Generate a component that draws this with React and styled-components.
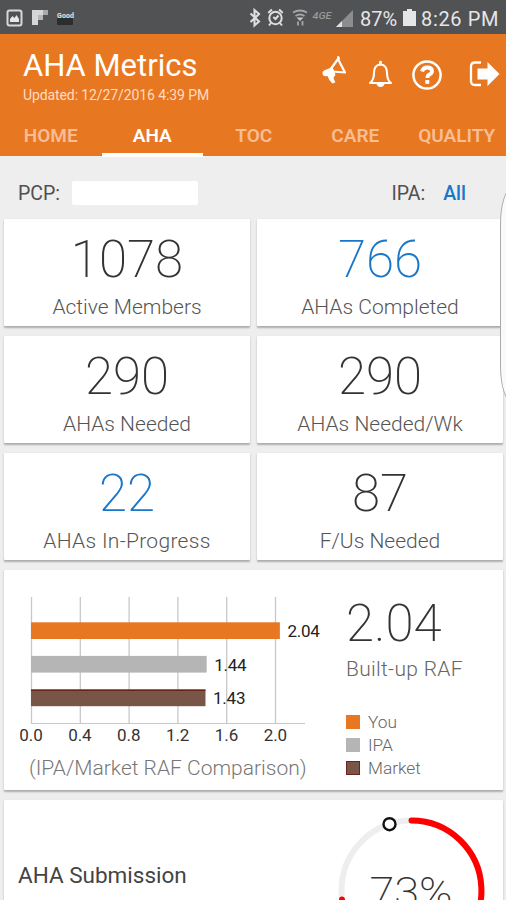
import React from 'react';
import styled, { createGlobalStyle } from 'styled-components';

const tabs = ['HOME', 'AHA', 'TOC', 'CARE', 'QUALITY'];

const metrics = [
  { value: '1078', label: 'Active Members' },
  { value: '766', label: 'AHAs Completed', link: true },
  { value: '290', label: 'AHAs Needed' },
  { value: '290', label: 'AHAs Needed/Wk' },
  { value: '22', label: 'AHAs In-Progress', link: true, wide: true },
  { value: '87', label: 'F/Us Needed' },
];

const bars = [
  { name: 'You', value: 2.04, color: '#e87722' },
  { name: 'IPA', value: 1.44, color: '#b5b5b5' },
  { name: 'Market', value: 1.43, color: '#795548', edge: '#6b2418' },
];

const ticks = [0, 0.4, 0.8, 1.2, 1.6, 2];

const NotificationIcons = () => (
  <svg width="76" height="34" viewBox="0 0 76 34">
    <rect x="7.5" y="10.5" width="14" height="15" rx="2" fill="none" stroke="#d8d8d8" strokeWidth="2" />
    <path d="M10 22v-3l2.5-3 2 2 2-3 2.5 4v3z" fill="#e8e8e8" />
    <path d="M32 10h16v5h-5v5h-5v5h-6z" fill="#d6d6d6" />
    <path d="M43 10h5v5h-5z" fill="#a9a9a9" />
    <path d="M38 15h5v5h-5z" fill="#b5b5b5" />
    <rect x="57" y="18" width="16" height="7" rx="1" fill="#2c2d2e" />
    <text x="57" y="18" fontSize="7" fontWeight="700" fill="#e2e2e2" textLength="17">Good</text>
  </svg>
);

const SignalIcons = () => (
  <svg width="108" height="34" viewBox="248 0 108 34">
    <path d="M250.5 13.5l8.5 8-4.5 4V10l4.5 4-8.5 8" fill="none" stroke="#dedede" strokeWidth="2.1" />
    <g fill="none" stroke="#dedede" strokeWidth="2">
      <circle cx="275.5" cy="18" r="6.2" />
      <path d="M278.5 15.500l-3 3.500-2.200-2M268.3 13l3.6-3.4M282.7 13l-3.6-3.4M271 23l-2 2.5M280 23l2 2.5" />
    </g>
    <g fill="none" stroke="#a5a6a6" strokeWidth="1.8">
      <path d="M293 12.500q7-4 14 0M295.500 16q4.500-3 9 0" />
      <path d="M296.500 17.500h7l-3.500 3.500z" fill="#c5c6c6" stroke="none" />
      <path d="M298 25.500v-4M302.500 21v4.500" />
    </g>
    <text x="312.5" y="18.500" fontSize="9" fontStyle="italic" fontWeight="500" fill="#97999a" textLength="19" lengthAdjust="spacingAndGlyphs">4GE</text>
    <path d="M336 27l17-17v17z" fill="#8b8d8e" />
    <path d="M336 27l6-6v6z" fill="#e2e2e2" />
  </svg>
);

const MegaphoneIcon = () => (
  <svg width="26" height="30" viewBox="321 56 26 30">
    <path d="M338 59l7 13.500-12.500-1-1-3.500z" fill="none" stroke="#fff" strokeWidth="2.2" strokeLinejoin="round" />
    <path d="M337 56.500l2-.5 1.200 3-3 .8z" fill="#fff" />
    <path d="M332.500 67l-8.500 3.500q-2 1-1.500 3.500t3.500 2.300l1.500-.3q1.500 5 5 7.500l3-1.200q-1.800-2.500-2-4.500l2-3z" fill="#fff" />
  </svg>
);

const BellIcon = () => (
  <svg width="26" height="30" viewBox="368 59 26 30">
    <path d="M370 83q4-3 4-10 0-8 6.500-8.500 6.500.5 6.500 8.500 0 7 4 10z" fill="none" stroke="#fff" strokeWidth="2.100" strokeLinejoin="round" />
    <path d="M379 65v-3.5q1.500-1.500 3 0V65zM376.5 84h8q-1 3-4 3t-4-3z" fill="#fff" />
  </svg>
);

const HelpIcon = () => (
  <svg width="32" height="32" viewBox="411 59 32 32">
    <circle cx="427" cy="75" r="13.6" fill="none" stroke="#fff" strokeWidth="2.5" />
    <path d="M422 71.5q1.200-4 5.300-4 4.700 0 4.700 3.700 0 2-2.500 3.300-2 1-2 3v.5" fill="none" stroke="#fff" strokeWidth="3.8" />
    <rect x="425.3" y="80" width="4" height="3.8" fill="#fff" />
  </svg>
);

const LogoutIcon = () => (
  <svg width="34" height="30" viewBox="467 60 34 30">
    <path d="M481 63.500h-6q-4 0-4 4v14.500q0 4 4 4h6" fill="none" stroke="#fff" strokeWidth="2.3" />
    <path d="M477.5 69.500h10v-6.500l12 12-12 12V80.500h-10z" fill="#fff" />
  </svg>
);

const RafChart = () => (
  <svg width="324" height="160" viewBox="4 590 324 160">
    {ticks.map((tick) => (
      <g key={tick}>
        <line x1={31.5 + tick * 122} x2={31.5 + tick * 122} y1="597" y2="723.5" stroke="#c8c8c8" strokeWidth="1.3" />
        <text x={31 + tick * 122.2} y="741" textAnchor="middle" fontSize="17" fill="#333" textLength="23.5">
          {tick.toFixed(1)}
        </text>
      </g>
    ))}
    <line x1="31" x2="305" y1="723.5" y2="723.5" stroke="#c8c8c8" />
    {bars.map((bar, i) => (
      <g key={bar.name}>
        <rect x="31" y={622.3 + i * 33.6} width={bar.value * 122} height="16.7" fill={bar.color} />
        {bar.edge && <rect x="31" y={622.3 + i * 33.6} width={bar.value * 122} height="1.5" fill={bar.edge} />}
        <text x={38.500 + bar.value * 122} y={637 + i * 33.6} fontSize="17" fill="#222" textLength="32.500">
          {bar.value}
        </text>
      </g>
    ))}
  </svg>
);

const SubmissionGauge = () => (
  <Gauge viewBox="330 800 164 100">
    <circle cx="411.5" cy="890.5" r="70" fill="none" stroke="#eee" strokeWidth="6" />
    <path d="M411.5 820.5A70 70 0 1 1 342 899.5" fill="none" stroke="#f00" strokeWidth="6" strokeLinecap="round" />
    <circle cx="389.5" cy="824.2" r="6" fill="#fff" stroke="#111" strokeWidth="2.4" />
    <text x="411" y="907" textAnchor="middle" fontSize="43" fontWeight="200" fill="#333" textLength="83" lengthAdjust="spacingAndGlyphs">73%</text>
  </Gauge>
);

const App = () => {
  return (
    <Screen>
      <GlobalStyle />
      <StatusBar>
        <NotificationIcons />
        <StatusInfo>
          <SignalIcons />
          <Battery>87%</Battery>
          <svg width="13" height="17" viewBox="0 0 13 17">
            <path d="M0 2h4V0h5v2h4v15H0z" fill="#e6e6e6" />
          </svg>
          <Clock>8:26 PM</Clock>
        </StatusInfo>
      </StatusBar>
      <Header>
        <HeaderTop>
          <div>
            <Title>AHA Metrics</Title>
            <Updated>Updated: 12/27/2016 4:39 PM</Updated>
          </div>
          <Actions>
            <MegaphoneIcon />
            <BellIcon />
            <HelpIcon />
            <LogoutIcon />
          </Actions>
        </HeaderTop>
        <TabBar>
          {tabs.map((tab) => (
            <Tab key={tab} $active={tab === 'AHA'}>{tab}</Tab>
          ))}
        </TabBar>
      </Header>
      <FilterRow>
        <FilterLabel>PCP:</FilterLabel>
        <NameField />
        <FilterLabel>IPA:</FilterLabel>
        <FilterLink>All</FilterLink>
      </FilterRow>
      <MetricGrid>
        {metrics.map((metric) => (
          <MetricCard key={metric.label}>
            <BigNumber $link={metric.link}>{metric.value}</BigNumber>
            <Label $wide={metric.wide}>{metric.label}</Label>
          </MetricCard>
        ))}
      </MetricGrid>
      <ChartCard>
        <ChartColumn>
          <RafChart />
          <Caption>(IPA/Market RAF Comparison)</Caption>
        </ChartColumn>
        <Summary>
          <BigNumber>2.04</BigNumber>
          <Label $wide>Built-up RAF</Label>
          <Legend>
            {bars.map((bar) => (
              <LegendItem key={bar.name}>
                <Swatch $color={bar.color} $edge={bar.edge} />
                {bar.name}
              </LegendItem>
            ))}
          </Legend>
        </Summary>
      </ChartCard>
      <SubmissionCard>
        <SubmissionTitle>AHA Submission</SubmissionTitle>
        <SubmissionGauge />
      </SubmissionCard>
      <EdgeHandle />
    </Screen>
  );
};

const GlobalStyle = createGlobalStyle`
  * {
    box-sizing: border-box;
  }

  body {
    margin: 0;
    overflow: hidden;
    font-family: Roboto, "Liberation Sans", sans-serif;
  }

  svg {
    display: block;
    flex-shrink: 0;
  }
`;

const Screen = styled.div`
  position: relative;
  width: 506px;
  height: 900px;
  overflow: hidden;
  background: #eee;
`;

const StatusBar = styled.div`
  display: flex;
  justify-content: space-between;
  height: 34px;
  background: #505254;
  color: #e6e6e6;
`;

const StatusInfo = styled.div`
  display: flex;
  align-items: center;
  padding-right: 7px;
  font-size: 20px;
  white-space: nowrap;
`;

const Battery = styled.span`
  width: 43px;
  margin-left: 4px;
  padding-top: 3px;
`;

const Clock = styled.span`
  width: 78px;
  margin-left: 5px;
  padding-top: 3px;
  letter-spacing: 0.65px;
`;

const Header = styled.header`
  height: 122px;
  background: #e87722;
  color: #fff;
`;

const HeaderTop = styled.div`
  display: flex;
  justify-content: space-between;
  height: 82px;
  padding: 14px 5px 0 23px;
`;

const Title = styled.h1`
  margin: 0;
  font-size: 31px;
  font-weight: 400;
  line-height: 36px;
`;

const Updated = styled.div`
  margin-top: 2px;
  font-size: 14px;
  line-height: 18px;
  letter-spacing: -0.1px;
  color: #ffdcc0;
`;

const Actions = styled.div`
  display: grid;
  grid-template-columns: 47px 43px 56px 34px;
  align-items: start;
  padding-top: 8px;

  > :nth-child(n + 2) {
    margin-top: 3px;
  }
`;

const TabBar = styled.nav`
  display: grid;
  grid-template-columns: repeat(5, 101.5px);
  height: 40.5px;
`;

const Tab = styled.div`
  display: flex;
  align-items: center;
  justify-content: center;
  padding-top: 3px;
  font-size: 19px;
  font-weight: 600;
  color: ${({ $active }) => ($active ? '#fff' : '#f8bd93')};
  border-bottom: 4px solid ${({ $active }) => ($active ? '#fff' : 'transparent')};
`;

const FilterRow = styled.div`
  display: flex;
  align-items: center;
  height: 62px;
  padding: 12px 40px 0 18px;
  font-size: 19.5px;
`;

const FilterLabel = styled.span`
  color: #505050;
`;

const NameField = styled.div`
  width: 126px;
  height: 24px;
  margin: 0 auto 0 12px;
  border-radius: 2px;
  background: #fff;
`;

const FilterLink = styled.span`
  margin-left: 18px;
  font-weight: 500;
  color: #1976c9;
`;

const Card = styled.section`
  background: #fff;
  border-radius: 1px;
  box-shadow: 0 1.5px 2px rgba(0, 0, 0, 0.28);
`;

const MetricGrid = styled.div`
  display: grid;
  grid-template-columns: 246px 246px;
  grid-auto-rows: 107px;
  gap: 10.3px 7px;
  padding: 0.5px 4px 0;
`;

const MetricCard = styled(Card)`
  padding-top: 11px;
  text-align: center;
`;

const BigNumber = styled.div`
  font-size: 51px;
  font-weight: 200;
  line-height: 60px;
  color: ${({ $link }) => ($link ? '#1976c9' : '#333')};
`;

const Label = styled.div`
  margin-top: 5px;
  font-size: 21px;
  font-weight: 300;
  line-height: 24px;
  letter-spacing: ${({ $wide }) => ($wide ? '0.3px' : '0')};
  color: #555;
`;

const ChartCard = styled(Card)`
  display: flex;
  height: 220px;
  margin: 10px 3px 0 4px;
`;

const ChartColumn = styled.div`
  width: 342px;
  padding-top: 20px;
`;

const Caption = styled.div`
  margin: 6px 0 0 25px;
  font-size: 21px;
  font-weight: 300;
  line-height: 24px;
  color: #777;
  white-space: nowrap;
`;

const Summary = styled.div`
  padding-top: 24px;
  white-space: nowrap;

  ${Label} {
    margin-top: 3px;
    color: #666;
  }
`;

const Legend = styled.div`
  margin-top: 30px;
`;

const LegendItem = styled.div`
  display: flex;
  align-items: center;
  gap: 8px;
  height: 22.6px;
  font-size: 17.3px;
  font-weight: 300;
  color: #666;
`;

const Swatch = styled.span`
  width: 14px;
  height: 14px;
  background: ${({ $color }) => $color};
  border: 1px solid ${({ $color, $edge }) => $edge || $color};
`;

const SubmissionCard = styled(Card)`
  display: flex;
  justify-content: space-between;
  height: 110px;
  margin: 10px 3px 0 4px;
  padding: 0 9px 0 14px;
`;

const SubmissionTitle = styled.h2`
  margin: 61px 0 0;
  font-size: 22.5px;
  font-weight: 400;
  line-height: 28px;
  color: #444;
`;

const Gauge = styled.svg`
  width: 164px;
  height: 100px;
`;

const EdgeHandle = styled.div`
  position: absolute;
  top: 188px;
  left: 500px;
  width: 24px;
  height: 214px;
  border: 1px solid #aaa;
  border-radius: 12px / 36px;
  background: #fafafa;
`;

export default App;
